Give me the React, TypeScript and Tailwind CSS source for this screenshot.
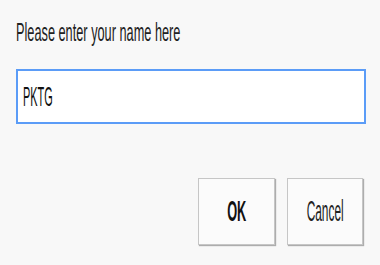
import React from "react";

export default function App() {
  return (
    <div className="w-[380px] h-[265px] bg-[#f8f8f8] flex flex-col pt-[20px] pl-[16px] pr-[14px] overflow-hidden [font-family:'Liberation_Sans',Arial,sans-serif]">
      <div className="h-[25px] leading-[25px] text-[25px] text-[#222] whitespace-nowrap">
        <span className="inline-block origin-left scale-x-[0.51]">Please enter your name here</span>
      </div>
      <div className="mt-[24px] h-[55px] border-2 border-[#5b9cf7] bg-white flex items-center pl-[5px]">
        <span className="inline-block origin-left scale-x-[0.39] text-[28px] leading-[28px] text-[#111] whitespace-nowrap">PKTG</span>
      </div>
      <div className="mt-[54px] flex justify-end gap-[12px] pr-[3px]">
        <div className="w-[77px] h-[67px] bg-[#fbfbfb] border border-[#c6c6c6] shadow-[1px_1px_1px_rgba(0,0,0,0.3)] flex items-center justify-center">
          <span className="inline-block scale-x-[0.44] text-[29px] leading-[29px] font-bold text-[#111] whitespace-nowrap">OK</span>
        </div>
        <div className="w-[76px] h-[67px] bg-[#fbfbfb] border border-[#c6c6c6] shadow-[1px_1px_1px_rgba(0,0,0,0.3)] flex items-center justify-center">
          <span className="inline-block scale-x-[0.41] text-[29px] leading-[29px] text-[#222] whitespace-nowrap">Cancel</span>
        </div>
      </div>
    </div>
  );
}
